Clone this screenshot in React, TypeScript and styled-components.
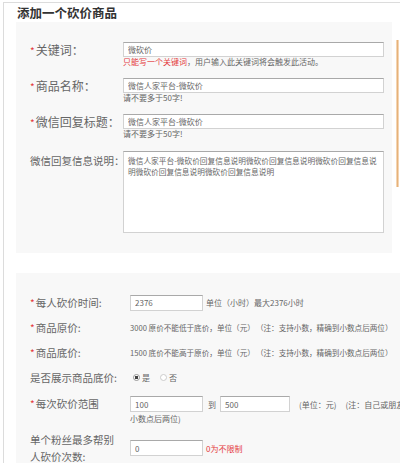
import React from "react";
import styled, { createGlobalStyle } from "styled-components";

const GlobalStyle = createGlobalStyle`
  html, body { margin: 0; padding: 0; background: #fff; }
  body { font-family: "Noto Sans CJK SC", "Noto Sans", sans-serif; }
`;

const Page = styled.div`
  position: relative;
  width: 400px;
  height: 463px;
  overflow: hidden;
  padding: 2px 0 0 3px;
  box-sizing: border-box;
  background: #fff;
`;

const Frame = styled.div`
  height: 100%;
  box-sizing: border-box;
  border-top: 1px solid #dcdcdc;
  border-left: 1px solid #dcdcdc;
  padding-left: 12px;
`;

const Title = styled.h2`
  margin: 0;
  padding-left: 1px;
  font-size: 12.5px;
  font-weight: bold;
  line-height: 19px;
  color: #333;
`;

const Panel = styled.section<{ $top?: number; $wide?: boolean }>`
  background: #f8f8f8;
  box-sizing: border-box;
  margin-top: ${(p) => p.$top ?? 0}px;
  width: ${(p) => (p.$wide ? "390px" : "376px")};
  padding: ${(p) => (p.$wide ? "17px 0 0 14px" : "20px 8px 20px 14px")};
  ${(p) => (p.$wide ? "height: 200px;" : "")}
`;

const Row = styled.div<{ $mt?: number }>`
  display: grid;
  grid-template-columns: 93px 261px;
  margin-top: ${(p) => p.$mt ?? 0}px;
`;

const Label = styled.div<{ $size?: number; $pt?: number }>`
  font-size: ${(p) => p.$size ?? 12}px;
  line-height: 15px;
  padding-top: ${(p) => p.$pt ?? 0}px;
  color: #666;
  white-space: nowrap;
`;

const Star = styled.span`
  color: #e4393c;
  font-size: 10px;
  margin-right: 1px;
`;

const TextInput = styled.input<{ $w?: number }>`
  display: block;
  width: ${(p) => (p.$w ? `${p.$w}px` : "100%")};
  height: ${(p) => (p.$w ? 16 : 15)}px;
  box-sizing: border-box;
  margin: 0;
  padding: 0 4px;
  border: 1px solid #d2d2d2;
  border-top-color: #a9a9a9;
  background: #fff;
  font-family: inherit;
  font-size: 8px;
  color: #666;
  outline: none;
`;

const Hint = styled.div`
  font-size: 8px;
  line-height: 10px;
  color: #666;
  white-space: nowrap;
`;

const Red = styled.span`
  color: #e4393c;
`;

const Area = styled.textarea`
  display: block;
  width: 261px;
  height: 82px;
  box-sizing: border-box;
  margin: 0;
  padding: 3px 4px;
  border: 1px solid #d2d2d2;
  border-top-color: #a9a9a9;
  background: #fff;
  resize: none;
  overflow: hidden;
  font-family: inherit;
  font-size: 7.7px;
  line-height: 11px;
  color: #666;
  outline: none;
`;

const Row2 = styled.div<{ $top?: boolean; $mt?: number }>`
  display: grid;
  grid-template-columns: 100px 1fr;
  align-items: ${(p) => (p.$top ? "start" : "center")};
  min-height: 25px;
  margin-top: ${(p) => p.$mt ?? 0}px;
`;

const Label2 = styled.div<{ $mt?: number }>`
  width: 90px;
  font-size: 10.5px;
  line-height: ${(p) => (p.$mt !== undefined ? 16 : 17)}px;
  margin-top: ${(p) => p.$mt ?? 0}px;
  color: #666;
`;

const Field = styled.div<{ $pt?: number }>`
  padding-top: ${(p) => p.$pt ?? 0}px;
  min-width: 0;
`;

const Line = styled.div`
  display: flex;
  align-items: center;
  white-space: nowrap;
  font-size: 8px;
  color: #666;
`;

const Note = styled.span<{ $ml?: number; $red?: boolean; $small?: boolean }>`
  margin-left: ${(p) => p.$ml ?? 0}px;
  font-size: ${(p) => (p.$small ? 7.6 : 8)}px;
  color: ${(p) => (p.$red ? "#e4393c" : "#666")};
  white-space: nowrap;
`;

const Cont = styled.div`
  margin-top: 2px;
  font-size: 8px;
  line-height: 10px;
  color: #666;
`;

const Radio = styled.span<{ $on?: boolean; $ml?: number }>`
  display: inline-block;
  box-sizing: border-box;
  width: 7px;
  height: 7px;
  margin-left: ${(p) => p.$ml ?? 0}px;
  margin-right: 2px;
  border-radius: 50%;
  border: 1px solid ${(p) => (p.$on ? "#999" : "#ccc")};
  background: ${(p) =>
    p.$on ? "radial-gradient(circle, #444 0 1.6px, #fff 2px)" : "#fff"};
`;

const Edge = styled.div`
  position: absolute;
  left: 396px;
  top: 40px;
  width: 3px;
  height: 147px;
  background: linear-gradient(to right, #fbe6cf, #e6b27a, #fbe6cf);
`;

const desc =
  "微信人家平台-微砍价回复信息说明微砍价回复信息说明微砍价回复信息说明微砍价回复信息说明微砍价回复信息说明";

export default function App() {
  return (
    <>
      <GlobalStyle />
      <Page>
        <Frame>
          <Title>添加一个砍价商品</Title>
          <Panel>
            <Row>
              <Label>
                <Star>*</Star>关键词：
              </Label>
              <div>
                <TextInput readOnly defaultValue="微砍价" />
                <Hint>
                  <Red>只能写一个关键词</Red>，用户输入此关键词将会触发此活动。
                </Hint>
              </div>
            </Row>
            <Row $mt={11}>
              <Label>
                <Star>*</Star>商品名称：
              </Label>
              <div>
                <TextInput readOnly defaultValue="微信人家平台-微砍价" />
                <Hint>请不要多于50字!</Hint>
              </div>
            </Row>
            <Row $mt={11}>
              <Label>
                <Star>*</Star>微信回复标题：
              </Label>
              <div>
                <TextInput readOnly defaultValue="微信人家平台-微砍价" />
                <Hint>请不要多于50字!</Hint>
              </div>
            </Row>
            <Row $mt={12}>
              <Label $size={10.5} $pt={2}>
                微信回复信息说明：
              </Label>
              <Area readOnly defaultValue={desc} />
            </Row>
          </Panel>
          <Panel $top={20} $wide>
            <Row2>
              <Label2>
                <Star>*</Star>每人砍价时间:
              </Label2>
              <Line>
                <TextInput readOnly defaultValue="2376" $w={73} />
                <Note $ml={3}>单位（小时）最大2376小时</Note>
              </Line>
            </Row2>
            <Row2>
              <Label2>
                <Star>*</Star>商品原价:
              </Label2>
              <Line>
                <Note $small>3000 原价不能低于底价，单位（元）</Note>
                <Note $small $ml={1}>（注：支持小数，精确到小数点后两位）</Note>
              </Line>
            </Row2>
            <Row2>
              <Label2>
                <Star>*</Star>商品底价:
              </Label2>
              <Line>
                <Note $small>1500 底价不能高于原价，单位（元）</Note>
                <Note $small $ml={1}>（注：支持小数，精确到小数点后两位）</Note>
              </Line>
            </Row2>
            <Row2>
              <Label2>是否展示商品底价:</Label2>
              <Line>
                <Radio $on $ml={3} />
                是
                <Radio $ml={10} />
                否
              </Line>
            </Row2>
            <Row2 $top>
              <Label2 $mt={6}>
                <Star>*</Star>每次砍价范围
              </Label2>
              <Field $pt={6}>
                <Line>
                  <TextInput readOnly defaultValue="100" $w={73} />
                  <Note $ml={5}>到</Note>
                  <TextInput
                    readOnly
                    defaultValue="500"
                    $w={70}
                    style={{ marginLeft: 4 }}
                  />
                  <Note $ml={9}>(单位：元)</Note>
                  <Note $ml={9}>(注：自己或朋友砍价时在此范围内随机，支持小数，精确到</Note>
                </Line>
                <Cont>小数点后两位)</Cont>
              </Field>
            </Row2>
            <Row2 $mt={7}>
              <Label2>单个粉丝最多帮别人砍价次数:</Label2>
              <Line>
                <TextInput readOnly defaultValue="0" $w={73} />
                <Note $ml={3} $red>
                  0为不限制
                </Note>
              </Line>
            </Row2>
          </Panel>
        </Frame>
        <Edge />
      </Page>
    </>
  );
}
